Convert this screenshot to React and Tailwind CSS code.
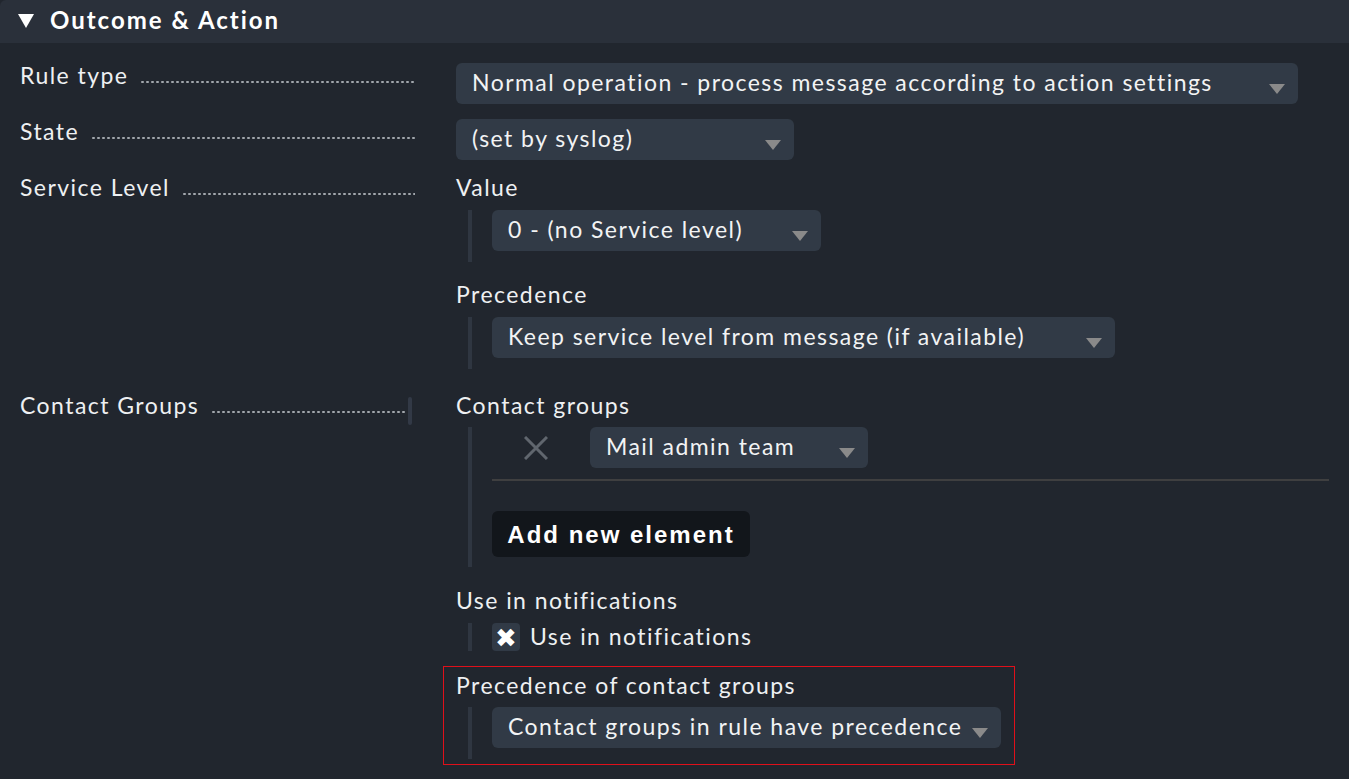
import React from "react";

const Arrow = () => (
  <svg width="16" height="10" viewBox="0 0 16 10" className="shrink-0">
    <polygon points="0,0 16,0 8,10" fill="#8a8a8a" />
  </svg>
);

function Select({ text, w }) {
  return (
    <div
      className="h-[41px] rounded-[6px] bg-[#313a46] flex items-center justify-between pl-[16px] pr-[13px] text-[#f2f3f4]"
      style={{ width: w }}
    >
      <span className="whitespace-nowrap leading-[24px] pb-[4px]">{text}</span>
      <span className="pt-[10px]"><Arrow /></span>
    </div>
  );
}

function Label({ text, bar }) {
  return (
    <div className={`w-[456px] shrink-0 pl-[20px] ${bar ? "pr-[49px]" : "pr-[41px]"} flex items-end h-[26px] -mt-[1px]`}>
      <span className="whitespace-nowrap pr-[12px] leading-[26px]">{text}</span>
      <span className="flex-1 h-[4px] mb-[4px] bg-[radial-gradient(circle,#a2a7ad_1px,transparent_1.5px)] bg-[length:5px_4px] bg-repeat-x"></span>
      {bar ? <span className="w-[4px] h-[28px] bg-[#323946] rounded-[2px] self-start mt-[5px] ml-[1px] -mr-[5px]"></span> : null}
    </div>
  );
}

function Block({ children, pb = "pb-[11px]" }) {
  return (
    <div className={`ml-[12px] border-l-[4px] border-[#2f3641] pl-[20px] ${pb}`}>{children}</div>
  );
}

export default function App() {
  return (
    <div
      className="min-h-[779px] bg-[#21262e] text-[#eef0f2] text-[23px] tracking-[1.45px]"
      style={{ fontFamily: "Lato, 'Noto Sans', sans-serif" }}
    >
      <div className="h-[43px] bg-[#2a303a] rounded-tl-[6px] flex items-center pl-[18px]">
        <svg width="16" height="14" viewBox="0 0 16 14" className="mr-[16px] mb-[1px]">
          <polygon points="0,0 16,0 8,14" fill="#ffffff" />
        </svg>
        <span className="font-bold text-[24px] tracking-[2px] text-white leading-none pb-[3px]">Outcome &amp; Action</span>
      </div>

      <div className="pt-[20px]">
        {/* Rule type */}
        <div className="flex">
          <div><Label text="Rule type" /></div>
          <Select text="Normal operation - process message according to action settings" w="842px" />
        </div>

        {/* State */}
        <div className="flex mt-[15px]">
          <div><Label text="State" /></div>
          <Select text="(set by syslog)" w="338px" />
        </div>

        {/* Service level */}
        <div className="flex mt-[15px]">
          <div><Label text="Service Level" /></div>
          <div className="flex-1">
            <div className="leading-[24px]">Value</div>
            <div className="mt-[11px]">
              <Block>
                <Select text="0 - (no Service level)" w="329px" />
              </Block>
            </div>
            <div className="leading-[24px] mt-[20px]">Precedence</div>
            <div className="mt-[11px]">
              <Block>
                <Select text="Keep service level from message (if available)" w="623px" />
              </Block>
            </div>
          </div>
        </div>

        {/* Contact groups */}
        <div className="flex mt-[24px]">
          <div><Label text="Contact Groups" bar /></div>
          <div className="flex-1 pr-[20px]">
            <div className="leading-[24px]">Contact groups</div>
            <div className="mt-[10px]">
              <Block pb="pb-[10px]">
                <div className="flex items-center">
                  <div className="w-[98px] flex justify-center pr-[10px]">
                    <svg width="24" height="24" viewBox="0 0 24 24">
                      <path d="M1 1 L23 23 M23 1 L1 23" stroke="#60666e" strokeWidth="3" />
                    </svg>
                  </div>
                  <Select text="Mail admin team" w="278px" />
                </div>
                <div className="h-[2px] bg-[#3f3f40] mt-[11px]"></div>
                <button className="mt-[30px] h-[46px] w-[258px] rounded-[6px] bg-[#12161b] text-white font-bold text-[24px] tracking-[2px] flex items-center justify-center pt-[2px]"
                  style={{ fontFamily: "'Liberation Sans', Arial, sans-serif" }}>
                  Add new element
                </button>
              </Block>
            </div>

            <div className="leading-[24px] mt-[21px]">Use in notifications</div>
            <div className="mt-[11px]">
              <Block pb="pb-[0px]">
                <div className="flex items-center h-[28px]">
                  <div className="w-[28px] h-[28px] rounded-[4px] bg-[#313a46] flex items-center justify-center text-white text-[26px] leading-none tracking-normal">✖</div>
                  <span className="ml-[10px] pb-[2px]">Use in notifications</span>
                </div>
              </Block>
            </div>

            <div className="mt-[15px] -ml-[13px] inline-block border border-[#e0101a] pl-[12px] pr-[13px] pt-[6px] pb-[5px]">
              <div className="leading-[24px]">Precedence of contact groups</div>
              <div className="mt-[10px]">
                <Block pb="pb-[11px]">
                  <Select text="Contact groups in rule have precedence" w="509px" />
                </Block>
              </div>
            </div>
          </div>
        </div>
      </div>
    </div>
  );
}
